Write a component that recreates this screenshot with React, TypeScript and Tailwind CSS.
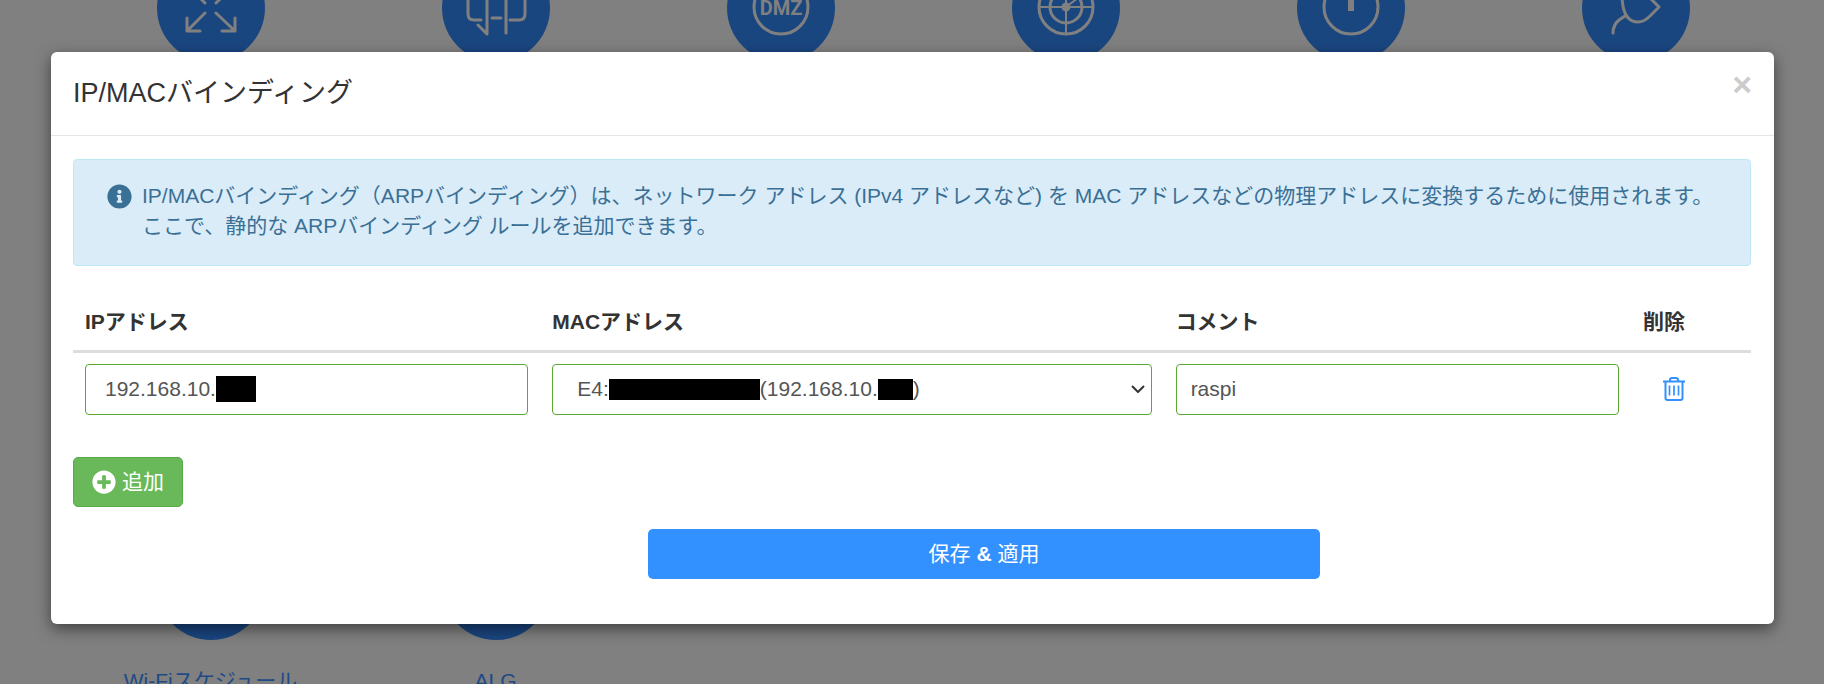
import { FC, ReactNode } from 'react';
import { FaInfoCircle, FaPlusCircle } from 'react-icons/fa';

const FONT = "font-['Liberation_Sans','Noto_Sans_CJK_JP',sans-serif]";

const Circle: FC<{ children?: ReactNode }> = ({ children }) => (
    <div className="w-[108px] h-[108px] rounded-full bg-[#1a4680] mx-auto">
        <svg viewBox="0 0 108 108" className="w-[108px] h-[108px]" fill="none" stroke="#808080" strokeWidth="3" strokeLinecap="round" strokeLinejoin="round">
            {children}
        </svg>
    </div>
);

const TrashIcon = () => (
    <svg viewBox="0 0 22 24" className="w-[22px] h-[24px]" fill="none" stroke="#3390ff" strokeWidth="2">
        <path d="M0 4.6H22M7 4V2.7Q7 1 9 1H13Q15 1 15 2.7V4M2.5 5V21Q2.5 23 4.7 23H17.3Q19.5 23 19.5 21V5" />
        <path d="M6.5 8.5V18.5M11 8.5V18.5M15.5 8.5V18.5" strokeWidth="1.7" />
    </svg>
);

const Block: FC<{ className: string }> = ({ className }) => <span className={`inline-block bg-black ${className}`} />;

const fieldClass = 'flex items-center w-full h-[51px] rounded border border-[#5aa832] bg-white text-[21px] text-[#555]';

export default function App() {
    return (
        <div className={`relative h-[684px] overflow-hidden bg-[#808080] ${FONT}`}>
            {/* page behind the dialog */}
            <div className="grid grid-cols-[repeat(6,285px)] pl-[68px] mt-[-46px]">
                <Circle>
                    <path d="M48 59L30 77M30 64V77H43M59 59L78 77M65 77H78V64M48 49L30 31M59 49L78 31" />
                </Circle>
                <Circle>
                    <path d="M26 38V60Q26 66 32 66H39M45 46V79M36 71L45 80M50 64H59M64 46V79M68 66H77Q83 66 83 60V38" />
                </Circle>
                <Circle>
                    <circle cx="54" cy="53" r="27" />
                    <text x="54" y="61" textAnchor="middle" stroke="none" fill="#808080" fontSize="20" fontWeight="700" fontFamily="Roboto, sans-serif">DMZ</text>
                </Circle>
                <Circle>
                    <circle cx="54" cy="53" r="27" />
                    <circle cx="54" cy="53" r="16" />
                    <circle cx="54" cy="53" r="3" fill="#808080" />
                    <path d="M27 53H81M54 26V80M54 53L66 44" strokeWidth="2" />
                </Circle>
                <Circle>
                    <circle cx="54" cy="53" r="27" />
                    <path d="M54 28V57" strokeWidth="6" strokeLinecap="butt" />
                </Circle>
                <Circle>
                    <path d="M40 40C40 60 46 68 56 68C62 68 66 64 68 62L77 53L67 43M43 62L37 66Q31 71 31 79" />
                </Circle>
            </div>
            <div className="grid grid-cols-[repeat(6,285px)] pl-[68px] mt-[470px]">
                <Circle />
                <Circle />
            </div>
            <div className="grid grid-cols-[repeat(6,285px)] pl-[68px] mt-[25px] text-[21px] text-[#1e4a86] text-center">
                <span>Wi-Fiスケジュール</span>
                <span>ALG</span>
            </div>

            {/* dialog */}
            <div className="absolute left-[51px] top-[52px] w-[1723px] h-[572px] rounded-md bg-white shadow-[0_5px_15px_rgba(0,0,0,0.5)]">
                <div className="flex items-center justify-between h-[84px] pl-[22px] pr-[22px] border-b border-[#e5e5e5]">
                    <h4 className="text-[27px] text-[#333]">IP/MACバインディング</h4>
                    <span className="text-[34px] font-bold leading-none text-[#cccccc] mb-[20px]">×</span>
                </div>

                <div className="pl-[22px] pr-[23px] pt-[23px]">
                    <div className="flex h-[107px] pt-[21px] pl-[33px] rounded border border-[#bce8f1] bg-[#daecf8] text-[21px] leading-[30px] text-[#3a7096]">
                        <FaInfoCircle className="w-[25px] h-[25px] mt-[3px] mr-[10px] shrink-0" />
                        <p>
                            IP/MACバインディング（ARPバインディング）は、ネットワーク アドレス (IPv4 アドレスなど) を MAC アドレスなどの物理アドレスに変換するために使用されます。
                            <br />
                            ここで、静的な ARPバインディング ルールを追加できます。
                        </p>
                    </div>

                    <table className="table-fixed w-full mt-[27px] text-[21px] text-[#333]">
                        <colgroup>
                            <col className="w-[467px]" />
                            <col className="w-[623px]" />
                            <col className="w-[467px]" />
                            <col className="w-[120px]" />
                        </colgroup>
                        <thead>
                            <tr className="border-b-[3px] border-[#dddddd]">
                                <th className="h-[58px] px-3 text-left font-bold">IPアドレス</th>
                                <th className="px-3 text-left font-bold">MACアドレス</th>
                                <th className="px-3 text-left font-bold">コメント</th>
                                <th className="px-3 text-left font-bold">削除</th>
                            </tr>
                        </thead>
                        <tbody>
                            <tr>
                                <td className="px-3 pt-[11px]">
                                    <div className={`${fieldClass} pl-[19px]`}>
                                        192.168.10.<Block className="w-[40px] h-[26px]" />
                                    </div>
                                </td>
                                <td className="px-3 pt-[11px]">
                                    <div className={`${fieldClass} pl-[24px] pr-[6px]`}>
                                        E4:<Block className="w-[151px] h-[21px]" />(192.168.10.<Block className="w-[35px] h-[21px]" />)
                                        <svg viewBox="0 0 14 8" className="w-[14px] h-[8px] ml-auto" fill="none" stroke="#333" strokeWidth="2">
                                            <path d="M1 1L7 7L13 1" />
                                        </svg>
                                    </div>
                                </td>
                                <td className="px-3 pt-[11px]">
                                    <input readOnly value="raspi" className={`${fieldClass} pl-[14px] outline-none`} />
                                </td>
                                <td className="px-3 pt-[11px]">
                                    <div className="flex pl-[20px]">
                                        <TrashIcon />
                                    </div>
                                </td>
                            </tr>
                        </tbody>
                    </table>

                    <button className="flex items-center gap-[6px] h-[50px] mt-[42px] pl-[18px] pr-[18px] rounded-[5px] border border-[#55ab45] bg-[#69b95a] text-[21px] text-white">
                        <FaPlusCircle className="w-[24px] h-[24px]" />
                        追加
                    </button>

                    <div className="flex justify-center mt-[22px] pl-[144px]">
                        <button className="w-[672px] h-[50px] rounded-[5px] bg-[#3390ff] text-[21px] text-white">
                            保存 <span className="font-bold">&amp;</span> 適用
                        </button>
                    </div>
                </div>
            </div>
        </div>
    );
}
